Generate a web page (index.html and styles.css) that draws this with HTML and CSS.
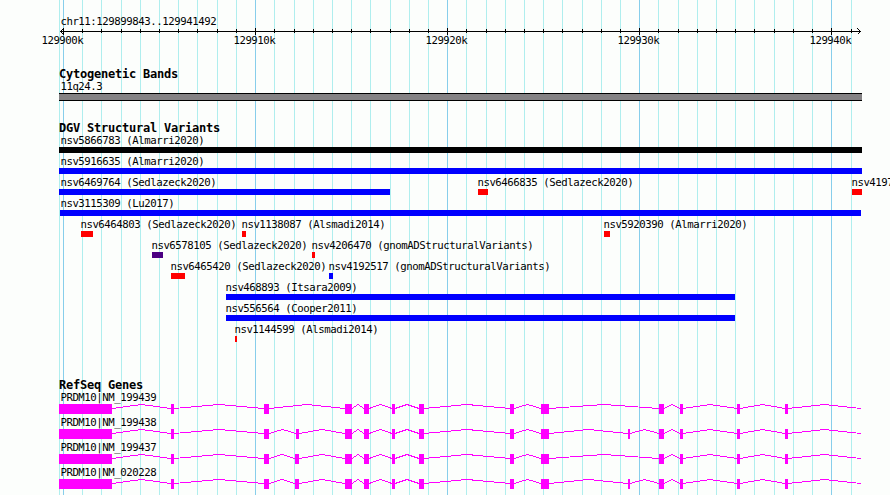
FILE: index.html
```
<!DOCTYPE html>
<html lang="en">
<head>
    <meta charset="UTF-8">
    <meta name="viewport" content="width=device-width, initial-scale=1.0">
    <title>chr11:129899843..129941492</title>
    <link rel="stylesheet" href="styles.css">
</head>
<body>
    <div class="browser">
        <svg class="grid" id="grid" width="890" height="495"></svg>

        <!-- Ruler -->
        <svg class="ruler" id="ruler" width="890" height="67"></svg>

        <section class="track cytoband">
            <h2>Cytogenetic Bands</h2>
            <svg id="bands" width="890" height="40"></svg>
        </section>

        <section class="track variants">
            <h2>DGV Structural Variants</h2>
            <svg id="variants" width="890" height="243"></svg>
        </section>

        <section class="track genes">
            <h2>RefSeq Genes</h2>
            <svg id="genes" width="890" height="103"></svg>
        </section>
    </div>

    <script>
        // pixel column of the n-th kilobase after 129900k
        function kb(n) {
            return Math.floor(63.53 + n * 19.207);
        }

        function rect(x, y, w, h, cls) {
            return `<rect class="${cls}" x="${x}" y="${y}" width="${w}" height="${h}"/>`;
        }

        function text(x, y, str) {
            return `<text x="${x + 0.4}" y="${y}">${str}</text>`;
        }

        // Grid and ruler
        let grid = rect(59, 0, 1, 495, 'minor');
        let ruler = text(60, 25, 'chr11:129899843..129941492') + rect(60, 31, 801, 1, 'axis');
        for (let n = 0; n <= 41; n++) {
            const x = kb(n);
            const major = n % 10 === 0;
            grid += rect(x, 0, 1, 495, major ? 'major' : 'minor');
            ruler += major ? rect(x, 28, 1, 7, 'axis') : rect(x, 29, 1, 4, 'axis');
            if (major) {
                ruler += text(x - 22, 44, `${129900 + n}k`);
            }
        }
        ruler += '<path class="arrow" d="M63.5 28.5L60.5 31.5L63.5 34.5M857.5 28.5L860.5 31.5L857.5 34.5"/>';
        document.getElementById('grid').innerHTML = grid;
        document.getElementById('ruler').innerHTML = ruler;

        // Cytogenetic band
        document.getElementById('bands').innerHTML =
            text(60, 9, '11q24.3') + rect(59, 12, 803, 8, 'axis') + rect(59, 13, 803, 6, 'band');

        // Variants: [name, label x, bar start, bar end, type]
        const variants = [
            [['nsv5866783 (Almarri2020)', 60, 59, 862, 'complex']],
            [['nsv5916635 (Almarri2020)', 60, 59, 862, 'gain']],
            [['nsv6469764 (Sedlazeck2020)', 60, 59, 390, 'gain'],
             ['nsv6466835 (Sedlazeck2020)', 477, 478, 488, 'loss'],
             ['nsv4197', 851, 852, 862, 'loss']],
            [['nsv3115309 (Lu2017)', 60, 60, 861, 'gain']],
            [['nsv6464803 (Sedlazeck2020)', 80, 81, 93, 'loss'],
             ['nsv1138087 (Alsmadi2014)', 241, 242, 246, 'loss'],
             ['nsv5920390 (Almarri2020)', 603, 604, 610, 'loss']],
            [['nsv6578105 (Sedlazeck2020)', 151, 152, 163, 'inversion'],
             ['nsv4206470 (gnomADStructuralVariants)', 311, 312, 315, 'loss']],
            [['nsv6465420 (Sedlazeck2020)', 170, 171, 185, 'loss'],
             ['nsv4192517 (gnomADStructuralVariants)', 328, 329, 333, 'gain']],
            [['nsv468893 (Itsara2009)', 225, 226, 735, 'gain']],
            [['nsv556564 (Cooper2011)', 225, 226, 735, 'gain']],
            [['nsv1144599 (Alsmadi2014)', 234, 235, 237, 'loss']]
        ];
        document.getElementById('variants').innerHTML = variants.map((row, i) =>
            row.map(([name, tx, start, end, type]) =>
                text(tx, 9 + i * 21, name) + rect(start, 12 + i * 21, end - start, 6, type)
            ).join('')
        ).join('');

        // Genes: exons shared by every transcript, then the extra ones of each
        const exons = [
            [59, 112], [171, 174], [264, 269], [345, 352], [364, 369], [392, 395], [419, 424],
            [510, 514], [541, 549], [659, 664], [680, 683], [737, 740], [785, 788]
        ];
        const genes = [
            ['PRDM10|NM_199439', []],
            ['PRDM10|NM_199438', [[296, 299], [628, 630]]],
            ['PRDM10|NM_199437', [[295, 299]]],
            ['PRDM10|NM_020228', [[295, 299], [628, 630]]]
        ];
        document.getElementById('genes').innerHTML = genes.map(([name, extra], i) => {
            const all = exons.concat(extra).sort((a, b) => a[0] - b[0]);
            const top = 12 + i * 25;
            let out = text(60, top - 3, name);
            all.forEach(([start, end], j) => {
                const next = j + 1 < all.length ? all[j + 1][0] : 861;
                out += rect(start, top, end - start, 10, 'exon');
                out += `<path class="intron" d="M${end} ${top + 4.5}L${(end + next) / 2} ${top + 0.5}L${next} ${top + 4.5}"/>`;
            });
            return out;
        }).join('');
    </script>
</body>
</html>
```

FILE: styles.css
```
body {
    margin: 0;
    background-color: #fcfefc;
    color: #000;
    overflow: hidden;
}

.browser {
    position: relative;
    width: 890px;
    height: 495px;
    overflow: hidden;
    font-family: "DejaVu Sans Mono", monospace;
}

svg {
    display: block;
    position: relative;
    shape-rendering: crispEdges;
}

/* Grid lines lie behind all tracks */
.grid {
    position: absolute;
    top: 0;
    left: 0;
}

text {
    font-size: 10.7px;
    letter-spacing: -0.44px;
    white-space: pre;
}

.track h2 {
    position: relative;
    height: 14px;
    margin: 0;
    padding-left: 59px;
    font-size: 12px;
    letter-spacing: -0.22px;
    line-height: 14px;
    font-weight: bold;
}

.minor {
    fill: #afeeee;
}

.major {
    fill: #87ceeb;
}

.axis {
    fill: #000;
}

.arrow {
    fill: none;
    stroke: #000;
}

.band {
    fill: #848284;
}

/* Variant types */
.complex {
    fill: #000;
}

.gain {
    fill: #00f;
}

.loss {
    fill: #f00;
}

.inversion {
    fill: #4b0082;
}

.exon {
    fill: #f0f;
}

.intron {
    fill: none;
    stroke: #f0f;
}
```
